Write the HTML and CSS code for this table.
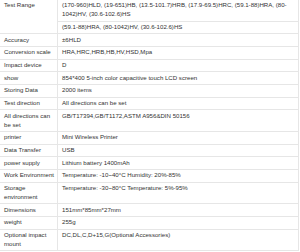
FILE: index.html
```html
<!DOCTYPE html>
<html>
<head>
<meta charset="utf-8">
<link rel="stylesheet" href="styles.css">
</head>
<body>
<table class="spec">
  <tbody>
    <tr>
      <td class="label" rowspan="2">Test Range</td>
      <td class="value">(170-960)HLD, (19-651)HB, (13.5-101.7)HRB, (17.9-69.5)HRC, (59.1-88)HRA, (80-<br>1042)HV, (30.6-102.6)HS</td>
    </tr>
    <tr><td class="value">(59.1-88)HRA, (80-1042)HV, (30.6-102.6)HS</td></tr>
    <tr><td class="label">Accuracy</td><td class="value">±6HLD</td></tr>
    <tr><td class="label">Conversion scale</td><td class="value">HRA,HRC,HRB,HB,HV,HSD,Mpa</td></tr>
    <tr><td class="label">Impact device</td><td class="value">D</td></tr>
    <tr><td class="label">show</td><td class="value">854*400 5-inch color capacitive touch LCD screen</td></tr>
    <tr><td class="label">Storing Data</td><td class="value">2000 items</td></tr>
    <tr><td class="label">Test direction</td><td class="value">All directions can be set</td></tr>
    <tr><td class="label">All directions can be set</td><td class="value">GB/T17394,GB/T1172,ASTM A956&amp;DIN 50156</td></tr>
    <tr><td class="label">printer</td><td class="value">Mini Wireless Printer</td></tr>
    <tr><td class="label">Data Transfer</td><td class="value">USB</td></tr>
    <tr><td class="label">power supply</td><td class="value">Lithium battery 1400mAh</td></tr>
    <tr><td class="label">Work Environment</td><td class="value">Temperature: -10~40°C Humidity: 20%-85%</td></tr>
    <tr><td class="label">Storage environment</td><td class="value">Temperature: -30~80°C Temperature: 5%-95%</td></tr>
    <tr><td class="label">Dimensions</td><td class="value">151mm*85mm*27mm</td></tr>
    <tr><td class="label">weight</td><td class="value">255g</td></tr>
    <tr><td class="label">Optional impact mount</td><td class="value">DC,DL,C,D+15,G(Optional Accessories)</td></tr>
  </tbody>
</table>
</body>
</html>
```

FILE: styles.css
```css
html, body {
  margin: 0;
  padding: 0;
  background: #ffffff;
}

.spec {
  width: 299px;
  border-collapse: separate;
  border-spacing: 0;
  table-layout: fixed;
  font-family: "Liberation Sans", Arial, sans-serif;
  font-size: 6.1px;
  line-height: 8.9px;
  color: #333333;
}

.spec td {
  vertical-align: top;
  border-bottom: 1px solid #e6e6e6;
  border-right: 1px solid #e6e6e6;
  padding: 1.4px 4px;
}

.spec .label {
  width: 51px;
  padding-right: 2px;
}

.spec .value {
  padding-left: 4px;
}
```
